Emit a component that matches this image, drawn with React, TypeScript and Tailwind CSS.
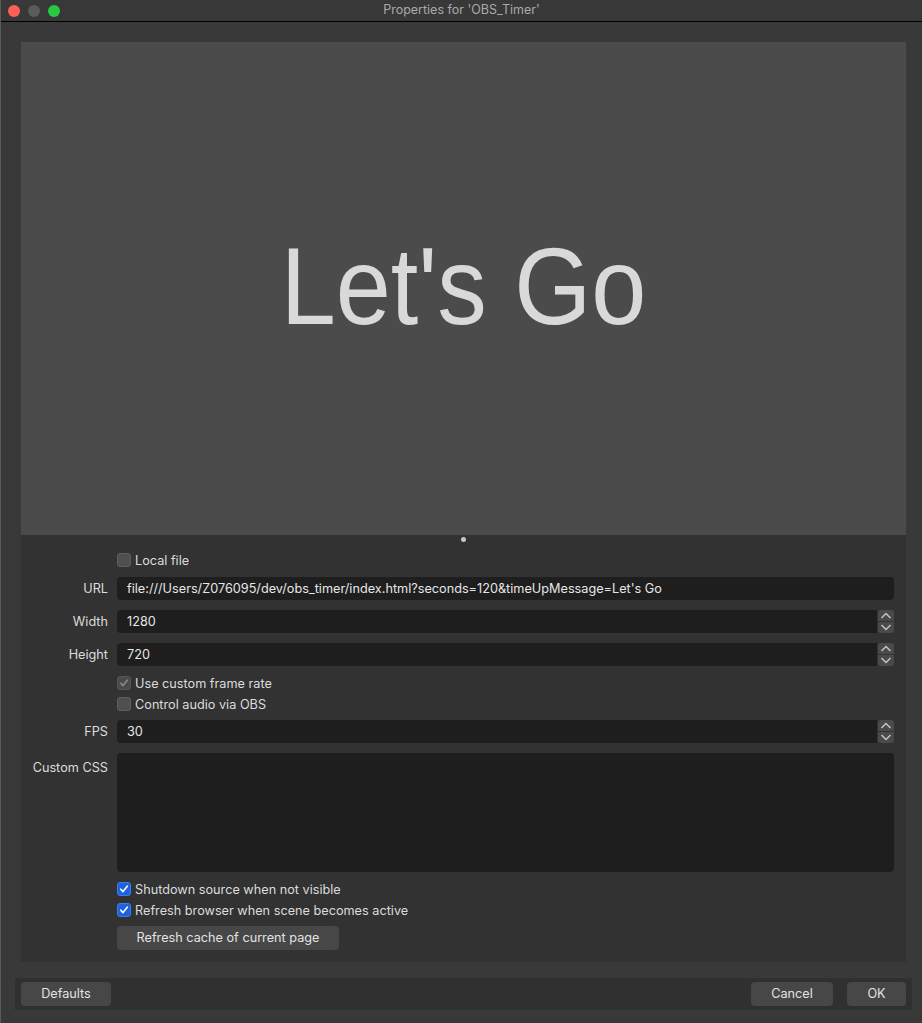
import React from 'react';

const Check = ({ checked, disabled }: { checked?: boolean; disabled?: boolean }) => {
    const box = checked
        ? disabled
            ? 'bg-[#4a4a4a] border-[#555555]'
            : 'bg-[#1e62e0] border-[#3b7bef]'
        : 'bg-[#4f4f4f] border-[#5e5e5e]';
    return (
        <span className={`w-[14px] h-[14px] rounded-[3px] border ${box} flex items-center justify-center shrink-0`}>
            {checked && (
                <svg width="10" height="10" viewBox="0 0 10 10">
                    <path
                        d="M1.8 5.2 L4 7.6 L8.3 2.2"
                        fill="none"
                        stroke={disabled ? '#8a8a8a' : '#ffffff'}
                        strokeWidth="1.6"
                        strokeLinecap="round"
                        strokeLinejoin="round"
                    />
                </svg>
            )}
        </span>
    );
};

const CheckRow = ({ label, checked, disabled }: { label: string; checked?: boolean; disabled?: boolean }) => (
    <div className="h-[21px] flex items-center">
        <div className="w-[96px] shrink-0" />
        <label className="flex items-center gap-[4px] text-[12.7px] text-[#dcdcdc]">
            <Check checked={checked} disabled={disabled} />
            <span>{label}</span>
        </label>
    </div>
);

const Label = ({ children }: { children?: React.ReactNode }) => (
    <div className="w-[87px] shrink-0 mr-[9px] text-right text-[12.7px] text-[#dcdcdc]">{children}</div>
);

const TextRow = ({ label, value }: { label: string; value: string }) => (
    <div className="h-[23px] flex items-center">
        <Label>{label}</Label>
        <div className="flex-1 h-full bg-[#1e1e1e] rounded-[4px] flex items-center pl-[10px] text-[12.7px] text-[#e6e6e6] whitespace-nowrap overflow-hidden">
            {value}
        </div>
    </div>
);

const Chevron = ({ up }: { up?: boolean }) => (
    <svg width="12" height="7" viewBox="0 0 12 7">
        <path
            d={up ? 'M1.5 6 L6 1.5 L10.5 6' : 'M1.5 1 L6 5.5 L10.5 1'}
            fill="none"
            stroke="#c4c4c4"
            strokeWidth="1.5"
        />
    </svg>
);

const SpinRow = ({ label, value }: { label: string; value: string }) => (
    <div className="h-[23px] flex items-center">
        <Label>{label}</Label>
        <div className="flex-1 h-full bg-[#1e1e1e] rounded-l-[4px] flex items-center pl-[10px] text-[12.7px] text-[#e6e6e6]">
            {value}
        </div>
        <div className="w-[16px] h-full ml-[1px] flex flex-col gap-[1px]">
            <div className="flex-1 bg-[#4a4a4a] rounded-t-[3px] flex items-center justify-center">
                <Chevron up />
            </div>
            <div className="flex-1 bg-[#4a4a4a] rounded-b-[3px] flex items-center justify-center">
                <Chevron />
            </div>
        </div>
    </div>
);

const Button = ({ children, className = '' }: { children: React.ReactNode; className?: string }) => (
    <button
        type="button"
        className={`h-[24px] bg-[#474747] rounded-[4px] text-[12.7px] text-[#e2e2e2] flex items-center justify-center ${className}`}
    >
        {children}
    </button>
);

export default function App() {
    return (
        <div className="w-[922px] h-[1023px] bg-[#393939] flex flex-col overflow-hidden border-l border-[#5a5a5a] font-['Inter','Noto_Sans',sans-serif]">
            {/* title bar */}
            <div className="h-[22px] shrink-0 bg-[#383838] border-b border-black grid grid-cols-[1fr_auto_1fr] items-center">
                <div className="flex items-center gap-[8px] pl-[7px]">
                    <span className="w-[12px] h-[12px] rounded-full bg-[#fe5f57]" />
                    <span className="w-[12px] h-[12px] rounded-full bg-[#5b5b5b]" />
                    <span className="w-[12px] h-[12px] rounded-full bg-[#28c840]" />
                </div>
                <div className="text-[12.5px] text-[#a9a9a9]">Properties for 'OBS_Timer'</div>
                <div />
            </div>

            <div className="flex-1 flex flex-col pt-[20px] pl-[20px] pr-[16px]">
                {/* preview */}
                <div className="h-[493px] shrink-0 bg-[#4b4b4b] flex items-center justify-center">
                    <span className="text-[99px] text-[#d9d9d9] leading-none -mt-[4px] scale-y-[1.1] font-['Liberation_Sans',Arial,sans-serif]">
                        Let's Go
                    </span>
                </div>

                {/* properties */}
                <div className="h-[427px] shrink-0 bg-[#323232] relative flex flex-col pt-[15px] pr-[12px]">
                    <span className="absolute left-[440px] top-[2px] w-[5px] h-[5px] rounded-full bg-[#c8c8c8]" />
                    <CheckRow label="Local file" />
                    <div className="mt-[6px]">
                        <TextRow label="URL" value="file:///Users/Z076095/dev/obs_timer/index.html?seconds=120&timeUpMessage=Let's Go" />
                    </div>
                    <div className="mt-[10px]">
                        <SpinRow label="Width" value="1280" />
                    </div>
                    <div className="mt-[10px]">
                        <SpinRow label="Height" value="720" />
                    </div>
                    <div className="mt-[7px]">
                        <CheckRow label="Use custom frame rate" checked disabled />
                        <CheckRow label="Control audio via OBS" />
                    </div>
                    <div className="mt-[5px]">
                        <SpinRow label="FPS" value="30" />
                    </div>
                    <div className="mt-[10px] h-[119px] flex items-start">
                        <div className="pt-[5px]">
                            <Label>Custom CSS</Label>
                        </div>
                        <div className="flex-1 h-full bg-[#1e1e1e] rounded-[4px]" />
                    </div>
                    <div className="mt-[7px]">
                        <CheckRow label="Shutdown source when not visible" checked />
                        <CheckRow label="Refresh browser when scene becomes active" checked />
                    </div>
                    <div className="mt-[5px] flex">
                        <div className="w-[96px] shrink-0" />
                        <Button className="w-[222px]">Refresh cache of current page</Button>
                    </div>
                </div>

                {/* bottom buttons */}
                <div className="mt-[16px] -ml-[6px] h-[32px] w-[897px] bg-[#303030] flex items-center px-[6px]">
                    <Button className="w-[90px]">Defaults</Button>
                    <div className="flex-1" />
                    <Button className="w-[82px]">Cancel</Button>
                    <Button className="w-[59px] ml-[14px]">OK</Button>
                </div>
            </div>
        </div>
    );
}
